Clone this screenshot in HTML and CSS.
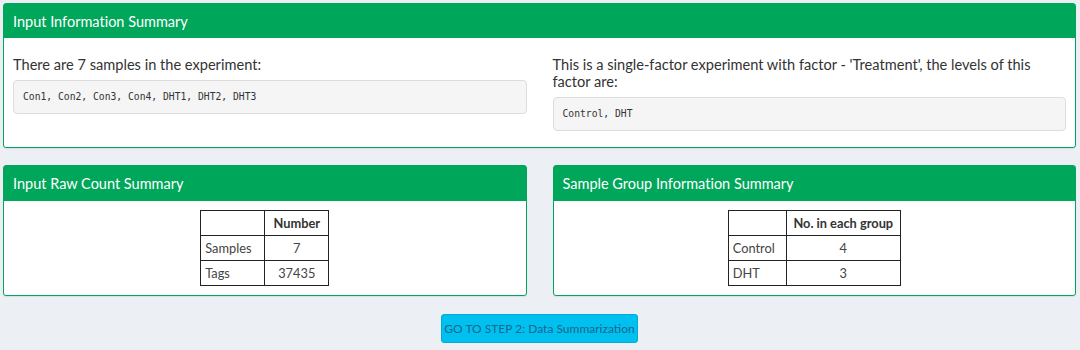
FILE: index.html
```html
<!DOCTYPE html>
<html lang="en">
<head>
    <meta charset="UTF-8">
    <meta name="viewport" content="width=device-width, initial-scale=1.0">
    <title>Step 1 - Input Summary</title>
    <link rel="stylesheet" href="styles.css">
</head>
<body>
    <main class="content">
        <section class="box">
            <div class="boxHeader">
                <h3 class="boxTitle">Input Information Summary</h3>
            </div>
            <div class="boxBody twoCols">
                <div class="col">
                    <p class="infoText">There are 7 samples in the experiment:</p>
                    <pre class="codeBlock">Con1, Con2, Con3, Con4, DHT1, DHT2, DHT3</pre>
                </div>
                <div class="col">
                    <p class="infoText">This is a single-factor experiment with factor - 'Treatment', the levels of this factor are:</p>
                    <pre class="codeBlock">Control, DHT</pre>
                </div>
            </div>
        </section>

        <div class="boxRow">
            <section class="box">
                <div class="boxHeader">
                    <h3 class="boxTitle">Input Raw Count Summary</h3>
                </div>
                <div class="boxBody">
                    <table class="summaryTable countTable">
                        <tr><th></th><th>Number</th></tr>
                        <tr><td>Samples</td><td class="num">7</td></tr>
                        <tr><td>Tags</td><td class="num">37435</td></tr>
                    </table>
                </div>
            </section>
            <section class="box">
                <div class="boxHeader">
                    <h3 class="boxTitle">Sample Group Information Summary</h3>
                </div>
                <div class="boxBody">
                    <table class="summaryTable groupTable">
                        <tr><th></th><th>No. in each group</th></tr>
                        <tr><td>Control</td><td class="num">4</td></tr>
                        <tr><td>DHT</td><td class="num">3</td></tr>
                    </table>
                </div>
            </section>
        </div>

        <div class="btnContainer">
            <button type="button" class="btn">GO TO STEP 2: Data Summarization</button>
        </div>
    </main>
</body>
</html>
```

FILE: styles.css
```css
body, html {
  margin: 0;
  padding: 0;
  background-color: #ecf0f5;
  font-family: Lato, "Open Sans", sans-serif;
  font-variant-ligatures: none;
  color: #333;
}

.content {
  padding: 3px 4px 0 3px;
}

.box {
  background-color: #fff;
  border: 1px solid #00a65a;
  border-radius: 3px;
  box-shadow: 0 1px 1px rgba(0, 0, 0, 0.08);
}

.boxHeader {
  background-color: #00a65a;
  height: 34px;
  display: flex;
  align-items: center;
  padding: 0 9px;
}

.boxTitle {
  margin: 0;
  font-size: 14.5px;
  font-weight: 400;
  color: #fff;
}

.boxBody {
  padding: 9px 9px;
}

.twoCols {
  display: grid;
  grid-template-columns: 1fr 1fr;
  column-gap: 26px;
  padding-top: 10px;
  padding-bottom: 8px;
}

.infoText {
  margin: 8px 0 7px;
  font-size: 14.6px;
  line-height: 17px;
}

.codeBlock {
  margin: 0 0 8px;
  padding: 9px 9px;
  background-color: #f5f5f5;
  border: 1px solid #ddd;
  border-radius: 4px;
  font-family: "DejaVu Sans Mono", monospace;
  font-size: 9.7px;
  line-height: 14px;
  color: #333;
}

.boxRow {
  display: grid;
  grid-template-columns: 1fr 1fr;
  column-gap: 26px;
  margin-top: 17px;
}

.boxRow .boxHeader {
  height: 35px;
}

.summaryTable {
  margin: 0 auto;
  border-collapse: collapse;
  font-size: 12.8px;
  color: #444;

  th, td {
    border: 1px solid #222;
    padding: 4px 4px;
    line-height: 16px;
    text-align: left;
    font-weight: 400;
  }

  th {
    font-weight: 700;
    text-align: center;
    color: #333;
  }

  .num {
    text-align: center;
  }
}

.countTable {
  th:first-child, td:first-child { width: 55px; }
  th:last-child, td:last-child { width: 55px; }
}

.groupTable {
  th:first-child, td:first-child { width: 49px; }
  th:last-child, td:last-child { width: 105px; }
}

.btnContainer {
  display: flex;
  justify-content: center;
  margin-top: 18px;
}

.btn {
  box-sizing: border-box;
  width: 197px;
  height: 29px;
  background-color: #00c0ef;
  border: 1px solid #00acd6;
  border-radius: 3px;
  color: #1a668c;
  font-family: Lato, "Open Sans", sans-serif;
  font-size: 12px;
  white-space: nowrap;
  padding: 0;
}
```
